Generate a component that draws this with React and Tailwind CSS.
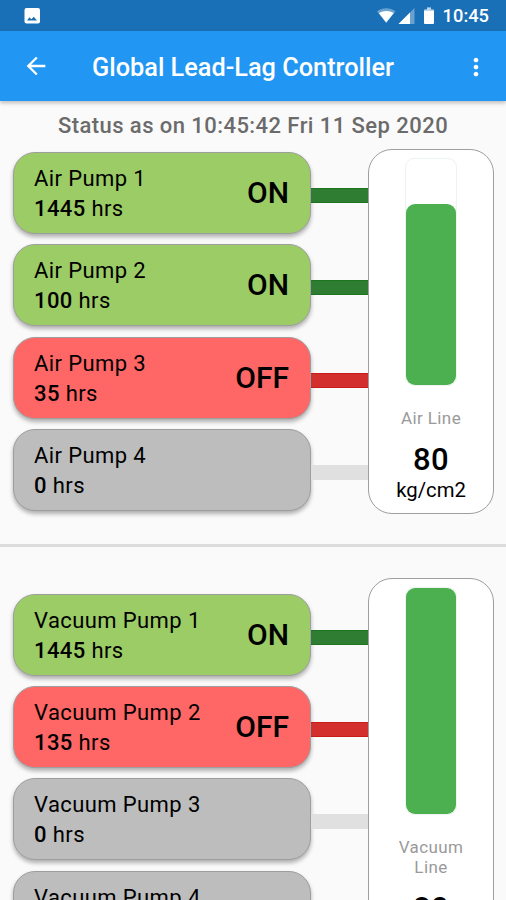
import React from 'react';
import clsx from 'clsx';
import { MdArrowBack, MdMoreVert } from 'react-icons/md';

const airPumps = [
  { name: 'Air Pump 1', hours: 1445, status: 'ON' },
  { name: 'Air Pump 2', hours: 100, status: 'ON' },
  { name: 'Air Pump 3', hours: 35, status: 'OFF' },
  { name: 'Air Pump 4', hours: 0, status: '' },
];

const vacuumPumps = [
  { name: 'Vacuum Pump 1', hours: 1445, status: 'ON' },
  { name: 'Vacuum Pump 2', hours: 135, status: 'OFF' },
  { name: 'Vacuum Pump 3', hours: 0, status: '' },
  { name: 'Vacuum Pump 4', hours: 0, status: '' },
];

const cardColors = {
  ON: 'bg-[#9ccc65]',
  OFF: 'bg-[#ff6666]',
  '': 'bg-[#bdbdbd]',
};

const pipeColors = {
  ON: 'bg-[#2e7d32] border-[#1b751f]',
  OFF: 'bg-[#d32f2f] border-[#c81c1c]',
  '': 'bg-[#e0e0e0] border-[#e0e0e0]',
};

const StatusBar = () => (
  <div className="flex h-[31px] items-center justify-between bg-[#1a70b7] pl-[24px] pr-[17px] text-white">
    <svg className="h-4 w-4" viewBox="0 0 16 16">
      <rect x="0.5" y="0" width="15.5" height="15.5" rx="2" fill="currentColor" />
      <path d="M3 12.5 5.5 9.3 7.3 11.3 9.8 8.7 13 12.5Z" fill="#1a70b7" />
    </svg>
    <div className="flex items-center">
      <svg className="mt-px h-[18px] w-[39px]" viewBox="0 0 39 18">
        <path d="M0 4.2C5.5 0.2 13 0.2 18.5 4.2L9.2 16Z" fill="currentColor" opacity="0.35" />
        <path d="M1.8 5.9C6.5 3.2 12.3 3.2 16.8 5.9L9.2 15.6Z" fill="currentColor" />
        <path d="M21.5 17 37.5 1V17Z" fill="currentColor" opacity="0.35" />
        <path d="M21.5 17 33 5.5V17Z" fill="currentColor" />
      </svg>
      <svg className="ml-[8px] h-[17px] w-[10px]" viewBox="0 0 10 17">
        <path d="M3 0.5H7V2.5H9A1 1 0 0 1 10 3.5V16A1 1 0 0 1 9 17H1A1 1 0 0 1 0 16V3.5A1 1 0 0 1 1 2.5H3Z" fill="currentColor" />
        <path d="M0 4V3.5A1 1 0 0 1 1 2.5H3V0.5H7V2.5H9A1 1 0 0 1 10 3.5V4Z" fill="#1a70b7" opacity="0.3" />
      </svg>
      <span className="ml-[9px] mt-px text-[18.3px] font-medium leading-none">10:45</span>
    </div>
  </div>
);

const Header = ({ title }) => (
  <header className="relative z-10 flex h-[70px] items-center bg-[#2196f3] pl-[22px] pr-[16px] text-white shadow-[0_2px_4px_rgba(0,0,0,0.25)]">
    <button title="Back">
      <MdArrowBack className="h-7 w-7" />
    </button>
    <h1 className="ml-[42px] mt-[4px] flex-1 whitespace-nowrap text-[25.3px] font-medium">{title}</h1>
    <button title="Menu">
      <MdMoreVert className="mt-px h-7 w-7" />
    </button>
  </header>
);

const PumpRow = ({ name, hours, status }) => (
  <div className="flex h-[82px] items-center">
    <div
      className={clsx(
        'flex h-full w-[298px] items-center justify-between rounded-[22px] border border-[#9e9e9e] pl-5 pr-[21px] text-black shadow-[0_3px_4px_rgba(0,0,0,0.3)]',
        cardColors[status]
      )}
    >
      <div className="mt-[2px] text-[22px] leading-[30px] tracking-[0.4px]">
        <p>{name}</p>
        <p>
          <span className="font-medium">{hours}</span> hrs
        </p>
      </div>
      <span className="text-[30px] font-medium leading-none">{status}</span>
    </div>
    <div className={clsx('mt-[5px] h-[15px] w-[57px] border-y', pipeColors[status])} />
  </div>
);

const LinePanel = ({ label, value, unit, level }) => (
  <div className="flex w-[126px] shrink-0 flex-col items-center rounded-[24px] border border-[#9e9e9e] bg-white pl-5 pr-[20px] pt-[8px] pb-[11px]">
    <div className="flex h-[228px] w-[52px] shrink-0 flex-col justify-end rounded-[9px] border border-[#edf3ee]">
      <div className="shrink-0 rounded-[9px] bg-[#4caf50]" style={{ height: level }} />
    </div>
    <p className="mt-[22px] text-center text-[17px] leading-[20px] tracking-[0.4px] text-[#9a9a9a]">{label}</p>
    <p className="mt-[14px] text-[31px] font-medium leading-[36px] tracking-[0.5px] text-black">{value}</p>
    <p className="text-[20.3px] leading-[24px] text-black">{unit}</p>
  </div>
);

const PumpSection = ({ pumps, line, listClass }) => (
  <section className="flex items-start pl-[13px]">
    <div className={clsx('flex flex-col gap-[10.4px]', listClass)}>
      {pumps.map((pump) => (
        <PumpRow key={pump.name} {...pump} />
      ))}
    </div>
    <LinePanel {...line} />
  </section>
);

const App = () => {
  return (
    <div className="h-[900px] w-[506px] overflow-hidden bg-[#fafafa] font-['Roboto',sans-serif]">
      <StatusBar />
      <Header title="Global Lead-Lag Controller" />
      <p className="h-[48px] pt-[10px] text-center text-[22px] font-medium leading-[30px] tracking-[0.44px] text-[#6b6b6b]">
        Status as on 10:45:42 Fri 11 Sep 2020
      </p>
      <PumpSection
        pumps={airPumps}
        line={{ label: 'Air Line', value: 80, unit: 'kg/cm2', level: 181 }}
        listClass="pt-[3px]"
      />
      <hr className="mt-[30px] mb-[30.5px] h-[3px] border-0 bg-[#dcdcdc]" />
      <PumpSection
        pumps={vacuumPumps}
        line={{ label: 'Vacuum Line', value: 80, unit: 'kg/cm2', level: 226 }}
        listClass="pt-[16px]"
      />
    </div>
  );
};

export default App;
